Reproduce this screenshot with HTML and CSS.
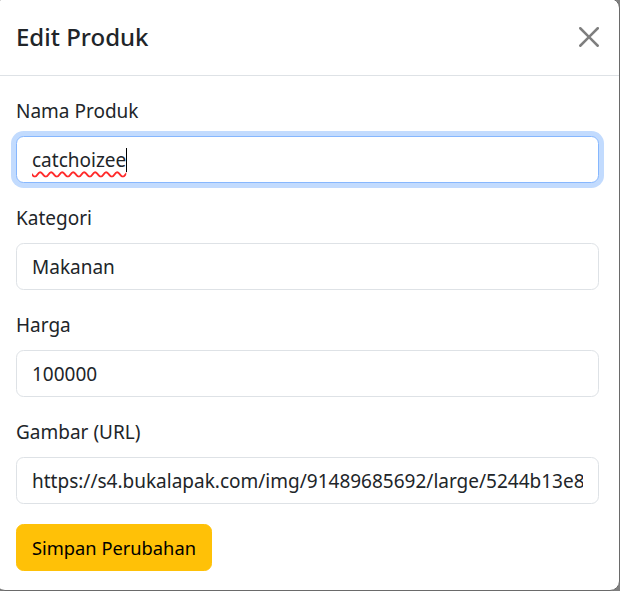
FILE: index.html
```html
<!DOCTYPE html>
<html lang="id">
<head>
<meta charset="utf-8">
<title>Edit Produk</title>
<link rel="stylesheet" href="styles.css">
</head>
<body>
<div class="modal">
  <div class="modal-header">
    <h5 class="modal-title">Edit Produk</h5>
    <button class="btn-close" type="button" aria-label="Close">
      <svg viewBox="0 0 16 16" width="20" height="20"><path d="M.293.293a1 1 0 0 1 1.414 0L8 6.586 14.293.293a1 1 0 1 1 1.414 1.414L9.414 8l6.293 6.293a1 1 0 0 1-1.414 1.414L8 9.414l-6.293 6.293a1 1 0 0 1-1.414-1.414L6.586 8 .293 1.707a1 1 0 0 1 0-1.414z"/></svg>
    </button>
  </div>
  <form class="modal-body">
    <div class="group">
      <label class="form-label">Nama Produk</label>
      <div class="form-control focused"><span class="typo">catchoizee</span><span class="caret"></span></div>
    </div>
    <div class="group">
      <label class="form-label">Kategori</label>
      <input class="form-control" type="text" value="Makanan">
    </div>
    <div class="group">
      <label class="form-label">Harga</label>
      <input class="form-control" type="text" value="100000">
    </div>
    <div class="group">
      <label class="form-label">Gambar (URL)</label>
      <input class="form-control" type="text" value="https://s4.bukalapak.com/img/91489685692/large/5244b13e85a8c0d4f.jpg">
    </div>
    <button class="btn-warning" type="button">Simpan Perubahan</button>
  </form>
</div>
</body>
</html>
```
FILE: styles.css
```css
* { box-sizing: border-box; }
html, body { margin: 0; padding: 0; }
body {
  background: #7f7f7f;
  font-family: "Noto Sans", "Open Sans", sans-serif;
  color: #212529;
  height: 591px;
  overflow: hidden;
}
.modal {
  margin-top: -2px;
  margin-left: -5px;
  width: 625px;
  height: 593px;
  background: #fff;
  border: 1px solid #6a6a6a;
  border-radius: 10px;
  display: flex;
  flex-direction: column;
}
.modal-header {
  display: flex;
  align-items: center;
  justify-content: space-between;
  flex: none;
  height: 77px;
  padding: 0 20px;
  border-bottom: 1px solid #dee2e6;
}
.modal-title {
  margin: 0;
  font-size: 24px;
  font-weight: 500;
  line-height: 1.5;
  color: #212529;
}
.btn-close {
  border: 0;
  background: transparent;
  padding: 0;
  width: 20px;
  height: 20px;
  display: flex;
  cursor: pointer;
}
.btn-close svg { fill: #000; opacity: .5; }
.modal-body {
  padding: 20px;
  display: flex;
  flex-direction: column;
  align-items: flex-start;
}
.group {
  width: 100%;
  margin-bottom: 20px;
  display: flex;
  flex-direction: column;
}
.form-label {
  font-size: 19px;
  line-height: 30px;
  margin-bottom: 10px;
}
.form-control {
  display: flex;
  align-items: center;
  width: 100%;
  height: 47px;
  padding: 0 15px;
  font-family: inherit;
  font-size: 19px;
  color: #212529;
  background: #fff;
  border: 1px solid #dee2e6;
  border-radius: 7.5px;
  outline: none;
}
.form-control.focused {
  border-color: #86b7fe;
  box-shadow: 0 0 0 5px rgba(13, 110, 253, .25);
}
.typo {
  text-decoration: underline wavy #ff2a2a;
  text-decoration-thickness: 1.5px;
  text-underline-offset: 4px;
}
.caret {
  width: 1px;
  height: 24px;
  background: #000;
}
.btn-warning {
  height: 47px;
  padding: 0 15px;
  font-family: inherit;
  font-size: 18.3px;
  color: #000;
  background: #ffc107;
  border: 1px solid #ffc107;
  border-radius: 7.5px;
  cursor: pointer;
}
```
